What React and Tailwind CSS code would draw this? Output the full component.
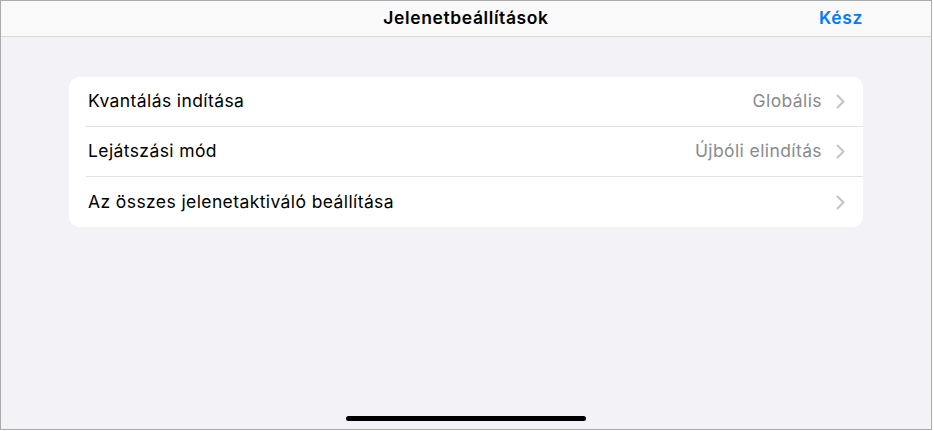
import React from "react";

function Chevron() {
  return (
    <svg width="9" height="15" viewBox="0 0 9 15" className="ml-[14px] shrink-0">
      <path d="M1.5 1.5 L7.5 7.5 L1.5 13.5" fill="none" stroke="#c4c4c7" strokeWidth="2" strokeLinecap="round" strokeLinejoin="round" />
    </svg>
  );
}

function Row({ label, value, last }) {
  return (
    <div className="flex h-[50px] items-stretch pl-[17px]">
      <div className={`flex flex-1 items-center pl-[2px] pr-[18px] ${last ? "" : "border-b border-[#e3e3e6]"}`}>
        <span className="flex-1 text-[17.5px] tracking-[0.4px] text-black whitespace-nowrap">{label}</span>
        {value && <span className="text-[17.5px] tracking-[0.4px] text-[#8a8a8e] whitespace-nowrap">{value}</span>}
        <Chevron />
      </div>
    </div>
  );
}

export default function App() {
  return (
    <div className="w-[934px] h-[431px] bg-white" style={{ fontFamily: "Inter, 'Noto Sans', sans-serif" }}>
      <div className="w-[932px] h-[430px] border border-[#ababab] bg-[#f2f2f7] flex flex-col">
        <div className="h-[36px] shrink-0 bg-[#f9f9f9] border-b border-[#d9d9dc] flex items-center relative">
          <div className="flex-1 text-center text-[17.5px] font-semibold tracking-[0.6px] text-black">Jelenetbeállítások</div>
          <div className="absolute right-[68px] top-0 h-full flex items-center text-[17.5px] font-semibold tracking-[0.6px] text-[#007aff]">Kész</div>
        </div>
        <div className="flex-1 flex flex-col px-[68px] pt-[40px]">
          <div className="bg-white rounded-[10px] overflow-hidden">
            <Row label="Kvantálás indítása" value="Globális" />
            <Row label="Lejátszási mód" value="Újbóli elindítás" />
            <Row label="Az összes jelenetaktiváló beállítása" last />
          </div>
          <div className="flex-1" />
          <div className="flex justify-center pb-[8px]">
            <div className="w-[240px] h-[5px] rounded-full bg-black" />
          </div>
        </div>
      </div>
    </div>
  );
}
